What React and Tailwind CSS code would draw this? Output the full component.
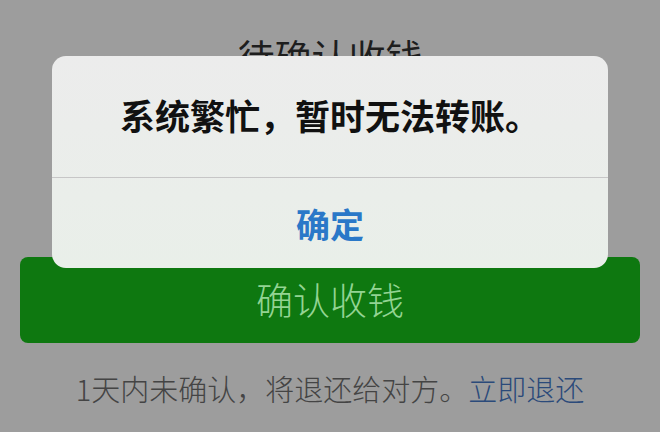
export default function App() {
  const font = { fontFamily: '"Noto Sans CJK SC", "Noto Sans", sans-serif' };
  return (
    <div
      className="relative w-[660px] h-[432px] overflow-hidden bg-[#9d9d9d] flex flex-col"
      style={font}
    >
      <div className="pt-[36px] h-[257px] text-center text-[37px] leading-[40px] text-[#1e1e1e]">
        待确认收钱
      </div>
      <div className="mx-[20px] h-[86px] rounded-[8px] bg-[#0e7810] flex items-center justify-center text-[37px] font-light text-[#93d493]">
        确认收钱
      </div>
      <div className="mt-[27px] flex justify-center text-[29px] leading-[36px] font-light text-[#444444]">
        <span>1天内未确认，将退还给对方。</span>
        <span className="text-[#2b4a7a]">立即退还</span>
      </div>

      <div className="absolute left-[52px] top-[56px] w-[556px] h-[212px] rounded-[14px] bg-gradient-to-b from-[#ececec] to-[#e9efe9] flex flex-col overflow-hidden">
        <div className="h-[121px] flex items-center justify-center text-[35px] font-semibold text-[#111] pb-[2px]">
          系统繁忙，暂时无法转账。
        </div>
        <div className="h-px bg-[#c6c6c6]" />
        <div className="flex-1 flex items-center justify-center text-[34px] font-bold text-[#2a78c8]">
          确定
        </div>
      </div>
    </div>
  );
}
